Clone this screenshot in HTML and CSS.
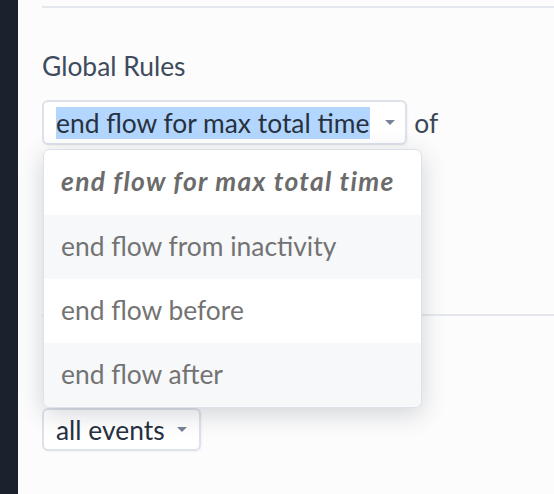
FILE: index.html
```html
<!DOCTYPE html>
<html>
<head>
<meta charset="utf-8">
<link rel="stylesheet" href="styles.css">
</head>
<body>
<div class="app">
  <aside class="sidebar"></aside>
  <main class="main">
    <div class="top-rule"></div>
    <h3 class="section-title">Global Rules</h3>
    <div class="rule-row">
      <div class="select-wrap">
        <div class="select">
          <span class="sel-text">end flow for max total time</span>
          <span class="caret"></span>
        </div>
        <ul class="menu">
          <li class="menu-item current">end flow for max total time</li>
          <li class="menu-item alt">end flow from inactivity</li>
          <li class="menu-item">end flow before</li>
          <li class="menu-item alt">end flow after</li>
        </ul>
      </div>
      <span class="word">of</span>
    </div>
    <div class="hidden-block"></div>
    <div class="divider"></div>
    <div class="hidden-block2"></div>
    <div class="rule-row">
      <div class="select small">
        <span class="plain-text">all events</span>
        <span class="caret"></span>
      </div>
    </div>
  </main>
</div>
</body>
</html>
```
FILE: styles.css
```css
html, body {
  margin: 0;
  padding: 0;
  height: 100%;
  background: #fcfcfc;
}
body {
  font-family: Lato, "Noto Sans", sans-serif;
}
.app {
  display: flex;
  height: 494px;
  overflow: hidden;
}
.sidebar {
  width: 18px;
  flex: none;
  background: #1b222d;
}
.main {
  flex: 1;
  padding-left: 24px;
  display: flex;
  flex-direction: column;
}
.top-rule {
  margin-top: 6px;
  height: 2px;
  background: #e4e8ee;
}
.section-title {
  margin: 42px 0 0 0;
  font-weight: 400;
  font-size: 26.4px;
  line-height: 32px;
  color: #3e4b5d;
}
.rule-row {
  display: flex;
  align-items: center;
  margin-top: 18px;
}
.select-wrap {
  position: relative;
}
.select {
  display: flex;
  align-items: center;
  height: 41px;
  padding: 0 10px 0 12px;
  background: #ffffff;
  border: 2px solid #dde2ea;
  border-radius: 6px;
  box-shadow: 1px 1px 2px rgba(0, 0, 0, 0.04);
}
.sel-text {
  display: inline-block;
  line-height: 32px;
  padding: 0 1px 0 0;
  font-size: 26.4px;
  color: #27313f;
  background: #b3d6fe;
}
.plain-text {
  font-size: 26.4px;
  line-height: 32px;
  color: #27313f;
}
.caret {
  margin-left: 15px;
  width: 0;
  height: 0;
  border-left: 5px solid transparent;
  border-right: 5px solid transparent;
  border-top: 5px solid #78829a;
}
.word {
  margin-left: 7px;
  font-size: 26.4px;
  color: #3a4757;
}
.menu {
  position: absolute;
  left: 1px;
  top: 49px;
  width: 377px;
  margin: 0;
  padding: 0;
  list-style: none;
  background: #ffffff;
  border: 1px solid #dde2ea;
  border-radius: 7px;
  overflow: hidden;
  box-shadow: 0 6px 24px rgba(40, 50, 70, 0.2);
  z-index: 5;
}
.menu-item {
  height: 64px;
  line-height: 62px;
  padding-left: 17px;
  font-size: 26.4px;
  color: #737373;
  white-space: nowrap;
}
.menu-item.alt {
  background: #f7f8fa;
}
.menu-item.current {
  height: 65px;
  font-weight: 700;
  font-style: italic;
  letter-spacing: 1.3px;
  color: #6b6b6b;
}
.hidden-block {
  height: 169px;
}
.divider {
  height: 2px;
  background: #e4e8ee;
}
.hidden-block2 {
  height: 74px;
}
.select.small {
  height: 39px;
  padding: 0 12px 0 12px;
  align-self: flex-start;
}
.small .caret {
  margin-left: 12px;
}
```
